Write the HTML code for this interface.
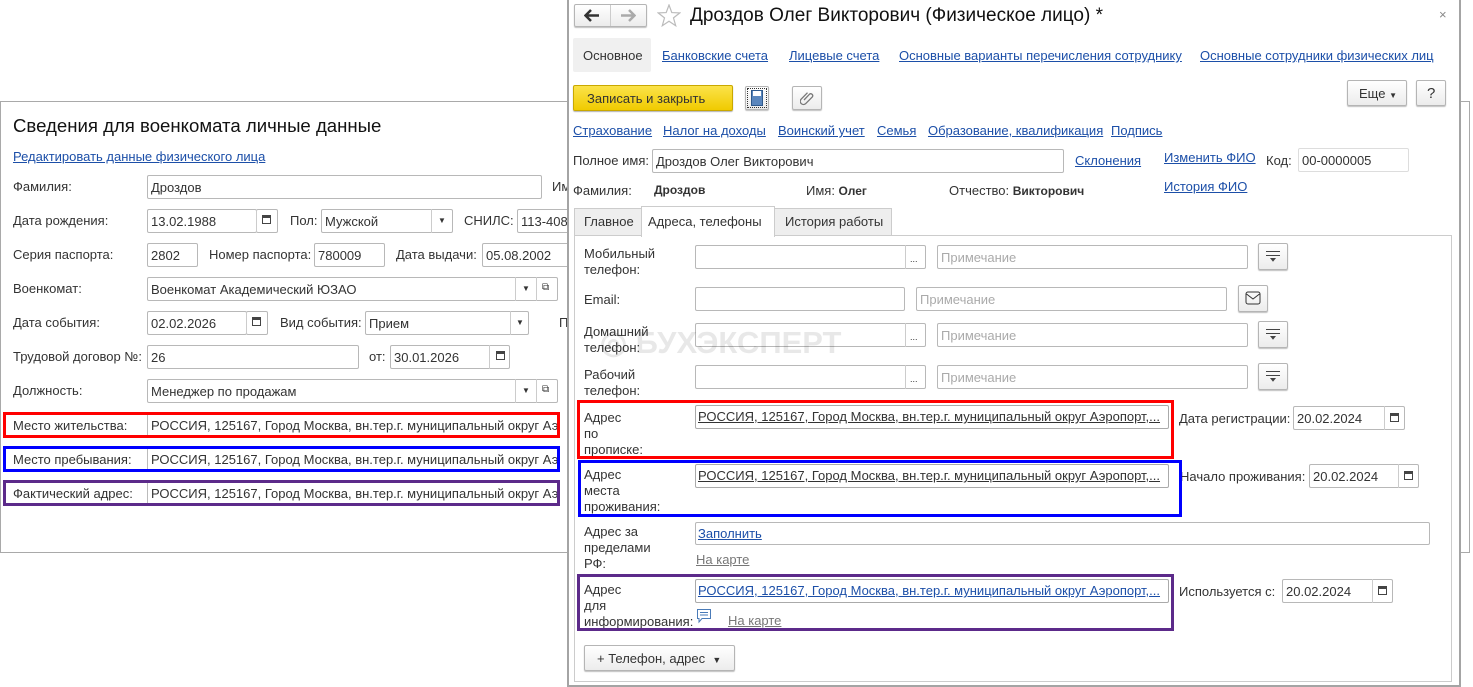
<!DOCTYPE html>
<html><head><meta charset="utf-8"><style>
*{box-sizing:border-box;margin:0;padding:0}
body{width:1473px;height:687px;background:#fff;position:relative;overflow:hidden;font-family:"Liberation Sans",Arial,sans-serif;font-size:13px;color:#333}
.a{position:absolute;white-space:nowrap}
.t{position:absolute;white-space:nowrap;line-height:15px}
.in{position:absolute;border:1px solid #b8b8b8;border-radius:2px;background:#fff;height:24px;padding:4px 3px;line-height:15px;white-space:nowrap;overflow:hidden;color:#333}
.lnk{color:#1c4fa8;text-decoration:underline}
.gl{color:#777;text-decoration:underline}
.btn{position:absolute;border:1px solid #b5b5b5;border-radius:2px;background:linear-gradient(#fff,#ececec);box-shadow:0 1px 1px rgba(0,0,0,.25)}
.cal{position:absolute;width:9px;height:9px;border:1px solid #444;border-top-width:3px}
.box{position:absolute;border:3px solid}
.ph{color:#aaa}
.vs{position:absolute;border-left:1px solid #ccc;height:24px}
</style></head><body>

<!-- back window -->
<div class="a" style="left:0;top:101px;width:1470px;height:452px;border:1px solid #a9a9a9"></div>
<div class="t" style="left:13px;top:115px;font-size:18.6px;line-height:21px;color:#111">Сведения для военкомата личные данные</div>
<div class="t lnk" style="left:13px;top:149px">Редактировать данные физического лица</div>
<div class="t" style="left:13px;top:179px">Фамилия:</div>
<div class="in" style="left:147px;top:175px;width:395px">Дроздов</div>
<div class="t" style="left:552px;top:179px">Им</div>
<div class="t" style="left:13px;top:213px">Дата рождения:</div>
<div class="in" style="left:147px;top:209px;width:110px">13.02.1988</div>
<div class="in" style="left:256px;top:209px;width:22px;border-left-color:#ccc"></div>
<div class="cal" style="left:262px;top:215px"></div>
<div class="t" style="left:290px;top:213px">Пол:</div>
<div class="in" style="left:321px;top:209px;width:132px">Мужской</div>
<div class="vs" style="left:431px;top:209px"></div>
<div class="t" style="left:438px;top:213px;font-size:8px">▼</div>
<div class="t" style="left:464px;top:213px">СНИЛС:</div>
<div class="in" style="left:517px;top:209px;width:60px">113-408-</div>
<div class="t" style="left:13px;top:247px">Серия паспорта:</div>
<div class="in" style="left:147px;top:243px;width:51px">2802</div>
<div class="t" style="left:209px;top:247px">Номер паспорта:</div>
<div class="in" style="left:314px;top:243px;width:71px">780009</div>
<div class="t" style="left:396px;top:247px">Дата выдачи:</div>
<div class="in" style="left:482px;top:243px;width:90px">05.08.2002</div>
<div class="t" style="left:13px;top:281px">Военкомат:</div>
<div class="in" style="left:147px;top:277px;width:411px">Военкомат Академический ЮЗАО</div>
<div class="vs" style="left:515px;top:277px"></div>
<div class="vs" style="left:536px;top:277px"></div>
<div class="t" style="left:522px;top:281px;font-size:8px">▼</div>
<div class="t" style="left:542px;top:280px;font-size:10px">⧉</div>
<div class="t" style="left:13px;top:315px">Дата события:</div>
<div class="in" style="left:147px;top:311px;width:100px">02.02.2026</div>
<div class="in" style="left:246px;top:311px;width:22px;border-left-color:#ccc"></div>
<div class="cal" style="left:252px;top:317px"></div>
<div class="t" style="left:280px;top:315px">Вид события:</div>
<div class="in" style="left:365px;top:311px;width:164px">Прием</div>
<div class="vs" style="left:510px;top:311px"></div>
<div class="t" style="left:516px;top:315px;font-size:8px">▼</div>
<div class="t" style="left:559px;top:315px">П</div>
<div class="t" style="left:13px;top:349px">Трудовой договор №:</div>
<div class="in" style="left:147px;top:345px;width:212px">26</div>
<div class="t" style="left:369px;top:349px">от:</div>
<div class="in" style="left:390px;top:345px;width:120px">30.01.2026</div>
<div class="vs" style="left:489px;top:345px"></div>
<div class="cal" style="left:496px;top:351px"></div>
<div class="t" style="left:13px;top:383px">Должность:</div>
<div class="in" style="left:147px;top:379px;width:411px">Менеджер по продажам</div>
<div class="vs" style="left:515px;top:379px"></div>
<div class="vs" style="left:536px;top:379px"></div>
<div class="t" style="left:522px;top:383px;font-size:8px">▼</div>
<div class="t" style="left:542px;top:382px;font-size:10px">⧉</div>

<div class="t" style="left:13px;top:418px">Место жительства:</div>
<div class="a" style="left:147px;top:414px;height:22px;border-left:1px solid #bbb"></div>
<div class="t" style="left:151px;top:418px;width:406px;overflow:hidden">РОССИЯ, 125167, Город Москва, вн.тер.г. муниципальный округ Аэропорт</div>
<div class="t" style="left:13px;top:452px">Место пребывания:</div>
<div class="a" style="left:147px;top:448px;height:22px;border-left:1px solid #bbb"></div>
<div class="t" style="left:151px;top:452px;width:406px;overflow:hidden">РОССИЯ, 125167, Город Москва, вн.тер.г. муниципальный округ Аэропорт</div>
<div class="t" style="left:13px;top:486px">Фактический адрес:</div>
<div class="a" style="left:147px;top:482px;height:22px;border-left:1px solid #bbb"></div>
<div class="t" style="left:151px;top:486px;width:406px;overflow:hidden">РОССИЯ, 125167, Город Москва, вн.тер.г. муниципальный округ Аэропорт</div>
<div class="box" style="left:3px;top:412px;width:557px;height:26px;border-color:#f00"></div>
<div class="box" style="left:3px;top:446px;width:557px;height:26px;border-color:#00f"></div>
<div class="box" style="left:3px;top:480px;width:557px;height:26px;border-color:#5c2a8a"></div>

<!-- front window -->
<div class="a" style="left:567px;top:0;width:894px;height:687px;background:#fff;border:2px solid #a4a4a4;border-top:none"></div>
<div class="btn" style="left:574px;top:4px;width:73px;height:23px"></div>
<div class="a" style="left:610px;top:5px;height:21px;border-left:1px solid #ccc"></div>
<svg class="a" style="left:584px;top:9px" width="16" height="13" viewBox="0 0 16 13"><path d="M1 6.5H15M7 1L1.5 6.5L7 12" stroke="#333" stroke-width="2.5" fill="none"/></svg>
<svg class="a" style="left:620px;top:9px" width="16" height="13" viewBox="0 0 16 13"><path d="M1 6.5H15M9 1L14.5 6.5L9 12" stroke="#aaa" stroke-width="2.5" fill="none"/></svg>
<svg class="a" style="left:657px;top:4px" width="24" height="23" viewBox="0 0 24 23"><path d="M12 1L14.8 8.6L22.8 8.9L16.5 13.9L18.7 21.7L12 17.2L5.3 21.7L7.5 13.9L1.2 8.9L9.2 8.6Z" stroke="#bbb" stroke-width="1.2" fill="none"/></svg>
<div class="t" style="left:690px;top:5px;font-size:19px;line-height:22px;color:#111">Дроздов Олег Викторович (Физическое лицо) *</div>
<div class="t" style="left:1439px;top:7px;color:#888">×</div>
<div class="a" style="left:573px;top:38px;width:78px;height:34px;background:#f0f0f0;border-radius:2px"></div>
<div class="t" style="left:583px;top:48px">Основное</div>
<div class="t lnk" style="left:662px;top:48px">Банковские счета</div>
<div class="t lnk" style="left:789px;top:48px">Лицевые счета</div>
<div class="t lnk" style="left:899px;top:48px">Основные варианты перечисления сотруднику</div>
<div class="t lnk" style="left:1200px;top:48px">Основные сотрудники физических лиц</div>
<div class="a" style="left:573px;top:85px;width:160px;height:26px;background:linear-gradient(#fbe34a,#f0cb00);border:1px solid #c9a800;border-radius:2px;box-shadow:0 1px 1px rgba(0,0,0,.3)"></div>
<div class="t" style="left:587px;top:91px;color:#333">Записать и закрыть</div>
<div class="btn" style="left:745px;top:86px;width:24px;height:24px;outline:1px dotted #333;outline-offset:-3px"></div>
<div class="a" style="left:751px;top:90px;width:12px;height:16px;background:#5a86bd;border:1px solid #2f5a8d"></div>
<div class="a" style="left:753px;top:91px;width:8px;height:5px;background:#fff"></div>
<div class="btn" style="left:792px;top:86px;width:30px;height:24px"></div>
<svg class="a" style="left:800px;top:90px" width="14" height="16" viewBox="0 0 14 16"><path d="M4 10L9.5 4.2a2 2 0 0 1 2.8 2.8L5.5 13.8a3.2 3.2 0 0 1-4.5-4.5L7.5 2.7" stroke="#777" stroke-width="1.3" fill="none"/></svg>
<div class="btn" style="left:1347px;top:80px;width:60px;height:26px"></div>
<div class="t" style="left:1359px;top:86px">Еще <span style="font-size:8px">▼</span></div>
<div class="btn" style="left:1416px;top:80px;width:30px;height:26px"></div>
<div class="t" style="left:1427px;top:85px;font-size:15px;line-height:17px">?</div>
<div class="t lnk" style="left:573px;top:123px">Страхование</div>
<div class="t lnk" style="left:663px;top:123px">Налог на доходы</div>
<div class="t lnk" style="left:778px;top:123px">Воинский учет</div>
<div class="t lnk" style="left:877px;top:123px">Семья</div>
<div class="t lnk" style="left:928px;top:123px">Образование, квалификация</div>
<div class="t lnk" style="left:1111px;top:123px">Подпись</div>
<div class="t" style="left:573px;top:153px">Полное имя:</div>
<div class="in" style="left:652px;top:149px;width:412px">Дроздов Олег Викторович</div>
<div class="t lnk" style="left:1075px;top:153px">Склонения</div>
<div class="t lnk" style="left:1164px;top:150px">Изменить ФИО</div>
<div class="t" style="left:1266px;top:153px">Код:</div>
<div class="in" style="left:1298px;top:148px;width:111px;border-color:#ddd">00-0000005</div>
<div class="t" style="left:573px;top:183px">Фамилия:</div>
<div class="t" style="left:654px;top:183px;font-weight:bold;font-size:12px">Дроздов</div>
<div class="t" style="left:806px;top:183px">Имя: <b style="font-size:12px">Олег</b></div>
<div class="t" style="left:949px;top:183px">Отчество: <b style="font-size:12px">Викторович</b></div>
<div class="t lnk" style="left:1164px;top:179px">История ФИО</div>
<div class="a" style="left:574px;top:208px;width:68px;height:28px;background:#eee;border:1px solid #ccc"></div>
<div class="t" style="left:584px;top:214px">Главное</div>
<div class="a" style="left:774px;top:208px;width:118px;height:28px;background:#eee;border:1px solid #ccc"></div>
<div class="t" style="left:785px;top:214px">История работы</div>
<div class="a" style="left:574px;top:235px;width:878px;height:447px;border:1px solid #ccc"></div>
<div class="a" style="left:641px;top:206px;width:134px;height:31px;background:#fff;border:1px solid #ccc;border-bottom:none"></div>
<div class="t" style="left:648px;top:214px">Адреса, телефоны</div>

<div class="t" style="left:584px;top:246px;line-height:16px">Мобильный<br>телефон:</div>
<div class="in" style="left:695px;top:245px;width:231px"></div>
<div class="vs" style="left:905px;top:245px"></div><div class="t" style="left:910px;top:252px;font-size:9px">...</div>
<div class="in ph" style="left:937px;top:245px;width:311px">Примечание</div>
<div class="btn" style="left:1258px;top:243px;width:30px;height:27px"></div>
<svg class="a" style="left:1264px;top:250px" width="18" height="12"><path d="M2 1.5H16M2 5.5H16M7 8.5H11L9 11Z" stroke="#444" fill="#444"/></svg>
<div class="t" style="left:584px;top:292px">Email:</div>
<div class="in" style="left:695px;top:287px;width:210px"></div>
<div class="in ph" style="left:916px;top:287px;width:311px">Примечание</div>
<div class="btn" style="left:1238px;top:285px;width:30px;height:27px"></div>
<svg class="a" style="left:1245px;top:291px" width="16" height="14"><rect x="1" y="1" width="14" height="12" rx="2" stroke="#333" fill="none"/><path d="M1.5 3L8 8L14.5 3" stroke="#333" fill="none"/></svg>
<div class="t" style="left:584px;top:324px;line-height:16px">Домашний<br>телефон:</div>
<div class="in" style="left:695px;top:323px;width:231px"></div>
<div class="vs" style="left:905px;top:323px"></div><div class="t" style="left:910px;top:330px;font-size:9px">...</div>
<div class="in ph" style="left:937px;top:323px;width:311px">Примечание</div>
<div class="btn" style="left:1258px;top:321px;width:30px;height:27px"></div>
<svg class="a" style="left:1264px;top:328px" width="18" height="12"><path d="M2 1.5H16M2 5.5H16M7 8.5H11L9 11Z" stroke="#444" fill="#444"/></svg>
<div class="t" style="left:584px;top:367px;line-height:16px">Рабочий<br>телефон:</div>
<div class="in" style="left:695px;top:365px;width:231px"></div>
<div class="vs" style="left:905px;top:365px"></div><div class="t" style="left:910px;top:372px;font-size:9px">...</div>
<div class="in ph" style="left:937px;top:365px;width:311px">Примечание</div>
<div class="btn" style="left:1258px;top:363px;width:30px;height:27px"></div>
<svg class="a" style="left:1264px;top:370px" width="18" height="12"><path d="M2 1.5H16M2 5.5H16M7 8.5H11L9 11Z" stroke="#444" fill="#444"/></svg>

<div class="t" style="left:600px;top:326px;font-size:31px;line-height:34px;font-weight:bold;color:rgba(0,0,0,.09)">◎ БУХЭКСПЕРТ</div>

<div class="t" style="left:584px;top:410px;line-height:16px">Адрес<br>по<br>прописке:</div>
<div class="in" style="left:695px;top:405px;width:474px;height:24px;padding:3px 2px;border-color:#aaa;text-decoration:underline">РОССИЯ, 125167, Город Москва, вн.тер.г. муниципальный округ Аэропорт,...</div>
<div class="t" style="left:1179px;top:411px">Дата регистрации:</div>
<div class="in" style="left:1293px;top:406px;width:112px">20.02.2024</div>
<div class="vs" style="left:1384px;top:406px"></div><div class="cal" style="left:1390px;top:413px"></div>
<div class="box" style="left:577px;top:400px;width:597px;height:59px;border-color:#f00"></div>

<div class="t" style="left:584px;top:467px;line-height:16px">Адрес<br>места<br>проживания:</div>
<div class="in" style="left:695px;top:464px;width:474px;height:24px;padding:3px 2px;border-color:#aaa;text-decoration:underline">РОССИЯ, 125167, Город Москва, вн.тер.г. муниципальный округ Аэропорт,...</div>
<div class="t" style="left:1180px;top:469px">Начало проживания:</div>
<div class="in" style="left:1309px;top:464px;width:110px">20.02.2024</div>
<div class="vs" style="left:1398px;top:464px"></div><div class="cal" style="left:1404px;top:471px"></div>
<div class="box" style="left:578px;top:460px;width:604px;height:57px;border-color:#00f"></div>

<div class="t" style="left:584px;top:524px;line-height:16px">Адрес за<br>пределами<br>РФ:</div>
<div class="in" style="left:695px;top:522px;width:735px;height:23px;padding:3px 2px"><span class="lnk">Заполнить</span></div>
<div class="t gl" style="left:696px;top:552px">На карте</div>

<div class="t" style="left:584px;top:582px;line-height:16px">Адрес<br>для<br>информирования:</div>
<div class="in" style="left:695px;top:579px;width:474px;height:24px;padding:3px 2px;border-color:#aaa"><span class="lnk">РОССИЯ, 125167, Город Москва, вн.тер.г. муниципальный округ Аэропорт,...</span></div>
<div class="t" style="left:1179px;top:584px">Используется с:</div>
<div class="in" style="left:1282px;top:579px;width:111px">20.02.2024</div>
<div class="vs" style="left:1372px;top:579px"></div><div class="cal" style="left:1378px;top:586px"></div>
<svg class="a" style="left:696px;top:608px" width="16" height="16"><path d="M1.5 1.5H14.5V10.5H6L3 14V10.5H1.5Z" stroke="#4a7bb8" fill="none"/><path d="M4 4.5H12M4 7H12" stroke="#4a7bb8"/></svg>
<div class="t gl" style="left:728px;top:613px">На карте</div>
<div class="box" style="left:577px;top:574px;width:597px;height:57px;border-color:#5c2a8a"></div>

<div class="btn" style="left:584px;top:645px;width:151px;height:26px"></div>
<div class="t" style="left:597px;top:651px">+ Телефон, адрес&nbsp; <span style="font-size:9px">▼</span></div>
</body></html>
